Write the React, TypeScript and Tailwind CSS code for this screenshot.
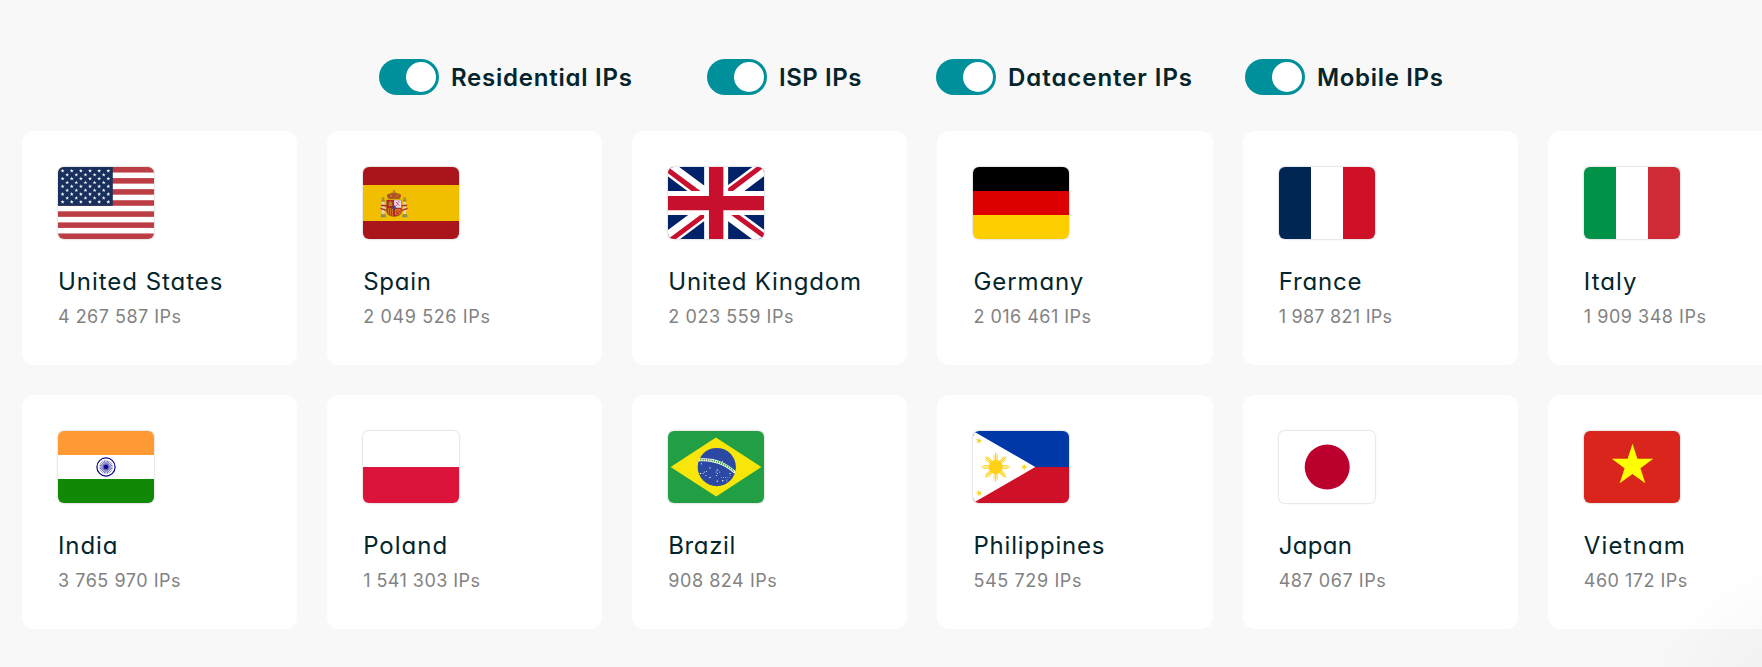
import type { ReactNode } from 'react'

function starPoints(cx: number, cy: number, r: number, turn = 0) {
  return Array.from({ length: 10 }, (_, i) => {
    const radius = i % 2 ? r * 0.382 : r
    const a = ((i * 36 - 90 + turn) * Math.PI) / 180
    return `${(cx + radius * Math.cos(a)).toFixed(2)},${(cy + radius * Math.sin(a)).toFixed(2)}`
  }).join(' ')
}

function VerticalStripes({ colors }: { colors: string[] }) {
  return (
    <>
      {colors.map((c, i) => (
        <rect key={i} x={i * 32} width="32" height="72" fill={c} />
      ))}
    </>
  )
}

function HorizontalStripes({ colors }: { colors: string[] }) {
  const h = 72 / colors.length
  return (
    <>
      {colors.map((c, i) => (
        <rect key={i} y={i * h} width="96" height={h} fill={c} />
      ))}
    </>
  )
}

function UnitedStates() {
  const stars = []
  for (let row = 0; row < 9; row++) {
    const odd = row % 2
    for (let col = 0; col < (odd ? 5 : 6); col++) {
      stars.push(
        <polygon
          key={`${row}-${col}`}
          fill="#fff"
          points={starPoints(4.6 + odd * 4.57 + col * 9.14, 3.9 + row * 3.88, 2.1)}
        />
      )
    }
  }
  return (
    <>
      <rect width="96" height="72" fill="#fff" />
      {[0, 1, 2, 3, 4, 5, 6].map((i) => (
        <rect key={i} y={(i * 2 * 72) / 13} width="96" height={72 / 13} fill="#bd3d44" />
      ))}
      <rect width="54.8" height="38.8" fill="#192f5d" />
      {stars}
    </>
  )
}

function Spain() {
  return (
    <>
      <rect width="96" height="72" fill="#aa151b" />
      <rect y="18" width="96" height="36" fill="#f1bf00" />
      {/* pillars */}
      {[18.6, 40.1].map((x) => (
        <g key={x}>
          <rect x={x + 0.2} y="34.6" width="2.8" height="12.4" fill="#d9d6c8" />
          <rect x={x - 0.6} y="47" width="4.6" height="1.2" fill="#b5901f" />
          <rect x={x - 0.8} y="48.2" width="5" height="2" fill="#7d8a70" />
          <rect x={x - 0.1} y="33.2" width="3.5" height="1.3" fill="#9a7a18" />
          <circle cx={x + 1.6} cy="31.7" r="1.1" fill="#b9a860" stroke="#8a6a18" strokeWidth=".6" />
        </g>
      ))}
      <path
        d="M18 38.4c2 .8 4-1 5.8 1M17.6 41.4l5.6 2M44.1 38.4c-2 .8-4-1-5.8 1M44.5 41.4l-5.6 2"
        fill="none"
        stroke="#b5232b"
        strokeWidth="1.5"
      />
      {/* crown */}
      <path d="M25.8 32c-3.6-3.6-1.4-6 1.6-5.2 1-1.6 2.6-1.6 3.6-.6 1-1 2.6-1 3.6.6 3-.8 5.2 1.6 1.6 5.2z" fill="#b5502a" />
      <path d="M25 28.5c1.8-2.4 4.4-1 6-2.6 1.6 1.6 4.2.2 6 2.6M31 23v3M29.9 24.2h2.2M26 31.4h10" fill="none" stroke="#9a7016" strokeWidth=".9" />
      <circle cx="28.2" cy="28.8" r=".6" fill="#f1bf00" />
      <circle cx="33.8" cy="28.8" r=".6" fill="#f1bf00" />
      {/* shield */}
      <path d="M23.6 33h15v11.5a7.5 5 0 0 1-15 0z" fill="#b5232b" />
      <path d="M31.1 33h7.5v7.800h-7.5z" fill="#eadbe2" />
      <path d="M32.8 38.8c3-.4 0-4 3.8-4M33 35l3.5 3.600" fill="none" stroke="#d0488a" strokeWidth=".9" />
      <path d="M25.6 39v-3.800h1v-.9h1.600v.9h1V39z" fill="#a98a1b" />
      <path d="M25.3 41v6.300M27.3 41v7.500M29.3 41v8" stroke="#d8a020" strokeWidth=".8" />
      <path d="M32.6 42.5h4.600v4l-4.600 1.600zM32.6 42.5l4.600 4M37.2 42.5l-4.600 4" fill="none" stroke="#dca01f" strokeWidth=".7" />
      <path d="M23.6 33h15v11.5a7.5 5 0 0 1-15 0z" fill="none" stroke="#7f4a1a" strokeWidth=".4" />
      <ellipse cx="31.1" cy="40.7" rx="1.6" ry="1.9" fill="#2b4f8c" stroke="#6f3a4a" strokeWidth=".6" />
    </>
  )
}

function UnitedKingdom() {
  return (
    <g transform="scale(.15)">
      <path fill="#012169" d="M0 0h640v480H0z" />
      <path fill="#fff" d="m75 0 244 181L562 0h78v62L400 241l240 178v61h-80L320 301 81 480H0v-60l239-178L0 64V0z" />
      <path fill="#c8102e" d="m424 281 216 159v40L369 281zm-184 20 6 35L54 480H0zM640 0v3L391 191l2-44L590 0zM0 0l239 176h-60L0 42z" />
      <path fill="#fff" d="M241 0v480h160V0zM0 160v160h640V160z" />
      <path fill="#c8102e" d="M0 193v96h640v-96zM273 0v480h96V0z" />
    </g>
  )
}

function India() {
  return (
    <>
      <HorizontalStripes colors={['#ff9933', '#ffffff', '#128807']} />
      <circle cx="48" cy="36" r="9.1" fill="#fff" stroke="#000088" strokeWidth="1.2" />
      {Array.from({ length: 12 }, (_, i) => (
        <path key={i} d="M48 29.2v13.6" stroke="#000088" strokeWidth=".5" transform={`rotate(${i * 15} 48 36)`} />
      ))}
      <circle cx="48" cy="36" r="2.1" fill="#000088" />
    </>
  )
}

const southernStars = [
  [223, 219, 5], [280, 246, 5], [328, 260, 5], [242, 273, 4], [257, 270, 4], [234, 281, 4],
  [253, 297, 4], [280, 310, 5], [320, 273, 4], [345, 273, 4], [330, 284, 4], [324, 297, 4],
  [216, 283, 5], [328, 335, 5], [365, 331, 6], [413, 284, 5], [417, 298, 3], [357, 310, 3],
  [370, 310, 3], [382, 310, 3], [394, 308, 3], [407, 308, 3], [393, 322, 3], [392, 334, 4],
  [362, 202, 4],
]

function Brazil() {
  return (
    <g transform="scale(.15)">
      <path fill="#229e45" d="M0 0h640v480H0z" />
      <path fill="#f8e509" d="m321.4 436 301.5-195.7L319.6 44 17.1 240.7z" />
      <circle cx="325.3" cy="240" r="127.5" fill="#2b49a3" />
      <path
        fill="#ffffef"
        d="M444.4 285.8a125 125 0 0 0 5.8-19.8c-67.8-59.5-143.3-90-238.7-83.7a125 125 0 0 0-8.5 20.9c113-10.8 196 39.2 241.4 82.6"
      />
      <path d="M214 192c92-5 166 25 226 77" fill="none" stroke="#309e3a" strokeWidth="10" strokeDasharray="9 6" />
      {southernStars.map(([x, y, r], i) => (
        <circle key={i} cx={x} cy={y} r={r * 0.85} fill="#ffffef" />
      ))}
    </g>
  )
}

function Philippines() {
  return (
    <>
      <HorizontalStripes colors={['#0038a8', '#ce1126']} />
      <path d="M0 0l62.3 36L0 72z" fill="#fff" />
      <g fill="#fcd116">
        <circle cx="22.7" cy="36" r="7" />
        {Array.from({ length: 8 }, (_, i) => (
          <path
            key={i}
            d="M22.1 30v-8.2l.6-.7.6.7V30zM20.9 30l-.3-6.8.8.5.3 6.3zM24.5 30l.3-6.800-.8.5-.3 6.300z"
            transform={`rotate(${i * 45} 22.7 36)`}
          />
        ))}
        <polygon points={starPoints(6, 9.8, 3.5, 12)} />
        <polygon points={starPoints(6.1, 62.1, 3.5, -12)} />
        <polygon points={starPoints(51.2, 36, 3.5, 18)} />
      </g>
    </>
  )
}

function Flag({ children }: { children: ReactNode }) {
  return (
    <div className="h-[72px] w-24 overflow-hidden rounded-md shadow-[0_0_2px_rgba(0,0,0,0.35)]">
      <svg viewBox="0 0 96 72" className="block h-full w-full">
        {children}
      </svg>
    </div>
  )
}

const types = [
  { label: 'Residential IPs', width: 'w-[328px]', tracking: 'tracking-[0.76px]' },
  { label: 'ISP IPs', width: 'w-[229px]', tracking: 'tracking-[0.55px]' },
  { label: 'Datacenter IPs', width: 'w-[309px]', tracking: 'tracking-[0.95px]' },
  { label: 'Mobile IPs', width: 'w-[200px]', tracking: 'tracking-[0.67px]' },
]

const countries = [
  { name: 'United States', ips: '4 267 587', flag: <UnitedStates />, nameGap: 'tracking-[0.96px]', ipsGap: 'tracking-[0.48px]' },
  { name: 'Spain', ips: '2 049 526', flag: <Spain />, nameGap: 'tracking-[0.75px]', ipsGap: 'tracking-[0.63px]' },
  { name: 'United Kingdom', ips: '2 023 559', flag: <UnitedKingdom />, nameGap: 'tracking-[0.8px]', ipsGap: 'tracking-[0.56px]' },
  {
    name: 'Germany',
    ips: '2 016 461',
    flag: <HorizontalStripes colors={['#000000', '#dd0000', '#ffce00']} />,
    nameGap: 'tracking-[0.9px]',
    ipsGap: 'tracking-[0.46px]',
  },
  {
    name: 'France',
    ips: '1 987 821',
    flag: <VerticalStripes colors={['#002654', '#ffffff', '#ce1126']} />,
    nameGap: 'tracking-[0.85px]',
    ipsGap: 'tracking-[0.26px]',
  },
  {
    name: 'Italy',
    ips: '1 909 348',
    flag: <VerticalStripes colors={['#009246', '#ffffff', '#ce2b37']} />,
    nameGap: 'tracking-[1.05px]',
    ipsGap: 'tracking-[0.52px]',
  },
  { name: 'India', ips: '3 765 970', flag: <India />, nameGap: 'tracking-[0.9px]', ipsGap: 'tracking-[0.53px]' },
  {
    name: 'Poland',
    ips: '1 541 303',
    flag: <HorizontalStripes colors={['#ffffff', '#dc143c']} />,
    nameGap: 'tracking-[1px]',
    ipsGap: 'tracking-[0.45px]',
  },
  { name: 'Brazil', ips: '908 824', flag: <Brazil />, nameGap: 'tracking-[0.6px]', ipsGap: 'tracking-[0.54px]' },
  { name: 'Philippines', ips: '545 729', flag: <Philippines />, nameGap: 'tracking-[0.8px]', ipsGap: 'tracking-[0.62px]' },
  {
    name: 'Japan',
    ips: '487 067',
    flag: (
      <>
        <rect width="96" height="72" fill="#fff" />
        <circle cx="48.2" cy="36" r="22.5" fill="#bc002d" />
      </>
    ),
    nameGap: 'tracking-[0.35px]',
    ipsGap: 'tracking-[0.55px]',
  },
  {
    name: 'Vietnam',
    ips: '460 172',
    flag: (
      <>
        <rect width="96" height="72" fill="#da251d" />
        <polygon points={starPoints(48.5, 34.6, 21.8)} fill="#ffff00" />
      </>
    ),
    nameGap: 'tracking-[1.15px]',
    ipsGap: 'tracking-[0.48px]',
  },
]

export default function App() {
  return (
    <main className="relative h-[667px] overflow-hidden bg-[#f8f8f8] font-['Inter',sans-serif] text-[#03252b] [font-feature-settings:'cv11']">
      <div className="flex pt-[59px] pl-[379px]">
        {types.map((t) => (
          <button key={t.label} type="button" className={`flex shrink-0 items-center gap-3 ${t.width}`}>
            <span className="flex h-9 w-[60px] shrink-0 justify-end rounded-full bg-[#00909b] p-[3px]">
              <span className="size-[30px] rounded-full bg-white" />
            </span>
            <span className={`h-9 pt-px text-2xl leading-9 font-semibold whitespace-nowrap ${t.tracking}`}>{t.label}</span>
          </button>
        ))}
      </div>

      <div className="mt-9 ml-[22px] grid grid-cols-[repeat(6,275.16px)] gap-x-[30px] gap-y-[30px]">
        {countries.map((c) => (
          <div key={c.name} className="h-[234px] rounded-xl bg-white p-9">
            <Flag>{c.flag}</Flag>
            <h3 className={`mt-[25px] text-2xl leading-9 whitespace-nowrap ${c.nameGap}`}>{c.name}</h3>
            <p className={`mt-0.5 text-lg leading-[30px] whitespace-nowrap text-[#828282] ${c.ipsGap}`}>{c.ips} IPs</p>
          </div>
        ))}
      </div>

      <div className="pointer-events-none absolute right-0 bottom-0 h-[110px] w-[110px] bg-[radial-gradient(circle_at_150px_160px,rgba(0,0,0,0.045),rgba(0,0,0,0)_165px)]" />
    </main>
  )
}
